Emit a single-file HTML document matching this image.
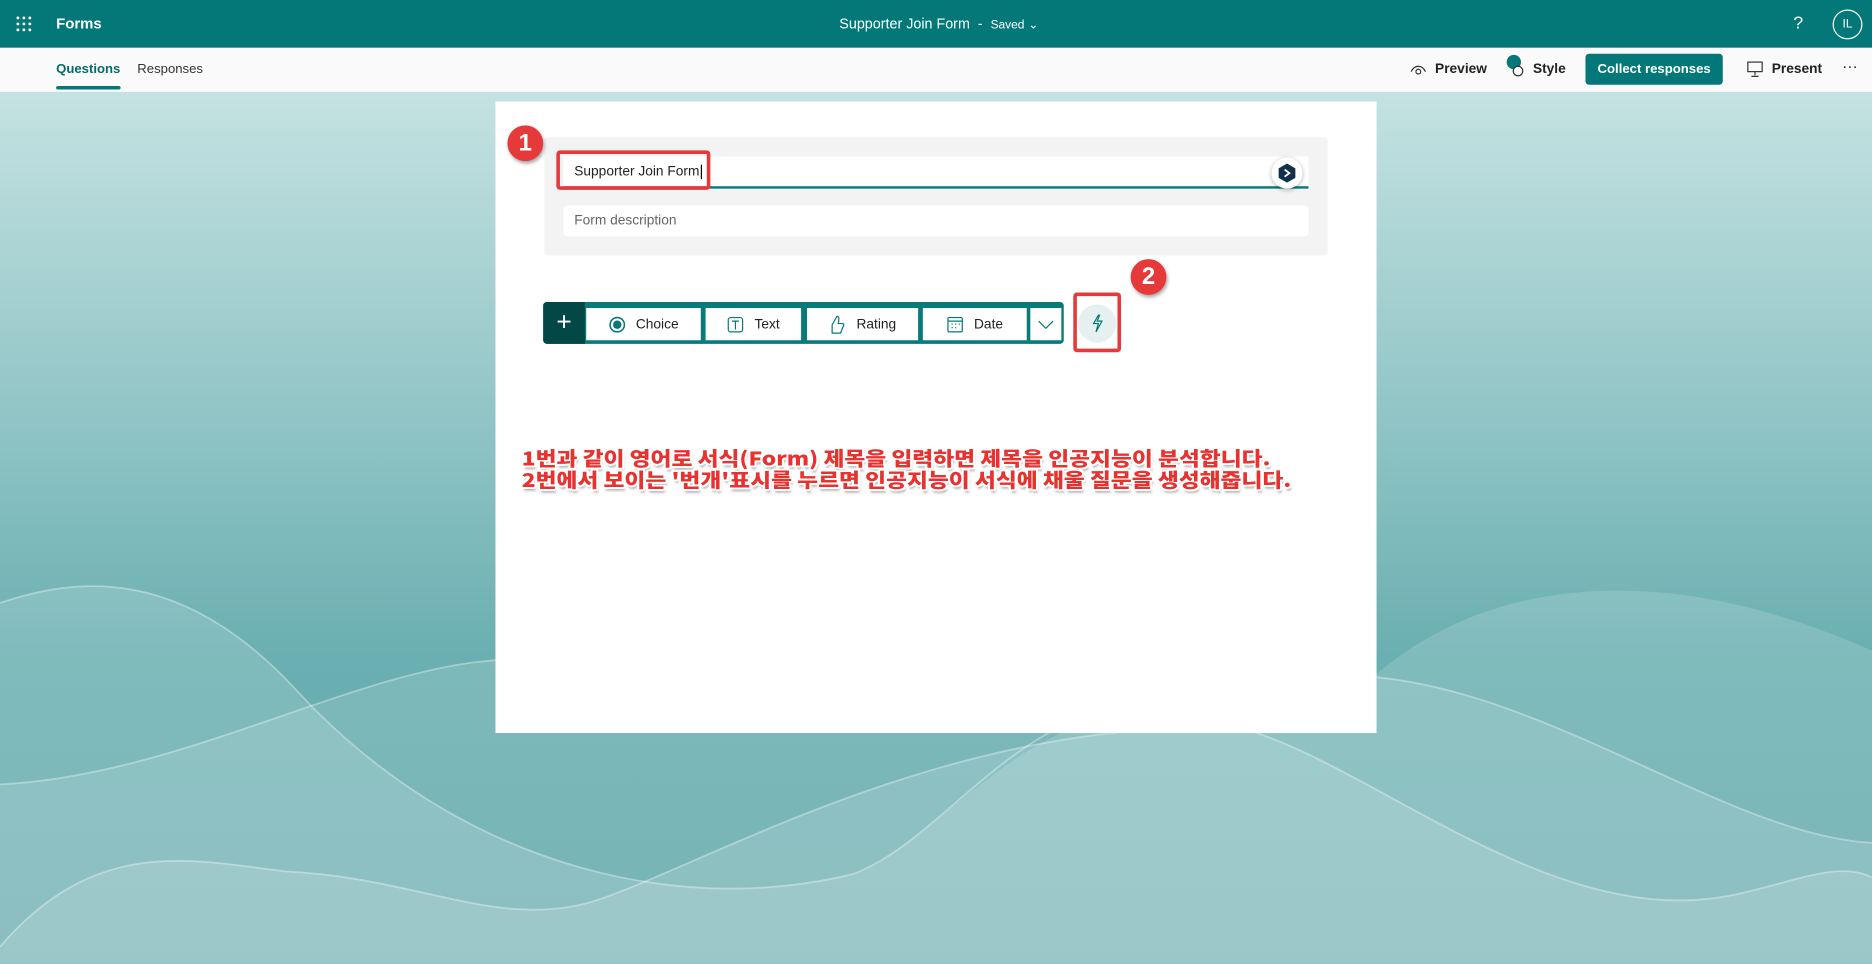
<!DOCTYPE html>
<html><head><meta charset="utf-8">
<style>
*{margin:0;padding:0;box-sizing:border-box}
html,body{width:1872px;height:964px;overflow:hidden;background:#8cc3c4}
#w{position:absolute;left:0;top:0;width:1568px;height:807px;transform:scale(1.19388);transform-origin:0 0;font-family:"Liberation Sans","Noto Sans CJK KR",sans-serif;overflow:hidden}
.abs{position:absolute}
.top{left:0;top:0;width:1568px;height:40px;background:#047878;color:#fff}
.nav{left:0;top:40px;width:1568px;height:37px;background:#fafafa}
.card{left:415px;top:85px;width:738px;height:529px;background:#fff}
.btn{position:absolute;top:258px;height:27px;background:#fff;font-size:11.5px;color:#222;display:flex;align-items:center;justify-content:center;gap:9px}
.rc{position:absolute;width:30px;height:30px;border-radius:50%;background:#e63a3a;color:#fff;font-weight:bold;font-size:20px;text-align:center;line-height:30px;box-shadow:1px 2px 3px rgba(0,0,0,.35)}
.kr{position:absolute;left:437px;font-size:16px;font-weight:900;color:#e8322f;white-space:nowrap;letter-spacing:0;line-height:16px;
text-shadow:-1.3px -1.3px 0 #fff,1.3px -1.3px 0 #fff,-1.3px 1.3px 0 #fff,1.3px 1.3px 0 #fff,0 1.5px 0 #fff,0 -1.5px 0 #fff,1.5px 0 0 #fff,-1.5px 0 0 #fff,1px 3px 2px rgba(0,0,0,.35);font-family:"Noto Sans CJK KR","Liberation Sans",sans-serif;transform-origin:0 0}
.nt{font-size:11.5px;color:#222;font-weight:bold}
</style></head><body><div id="w">
<svg class="abs" style="left:0;top:77px" width="1568" height="730" viewBox="0 77 1568 730">
<defs><linearGradient id="g" x1="0" y1="0" x2="0" y2="1"><stop offset="0" stop-color="#c5e2e2"/><stop offset=".65" stop-color="#6aafb1"/><stop offset="1" stop-color="#62a9ab"/></linearGradient></defs>
<rect x="0" y="77" width="1568" height="730" fill="url(#g)"/>
<path d="M0 505 C60 485 150 470 250 580 C380 720 560 770 715 732 C800 700 870 560 1040 600 L1150 567 C1250 480 1400 470 1568 545 L1568 807 L0 807Z" fill="#fff" opacity=".15"/>
<path d="M0 505 C60 485 150 470 250 580 C380 720 560 770 715 732 C800 700 870 560 1000 600" fill="none" stroke="#fff" stroke-width="1.5" opacity=".35"/>
<path d="M0 657 C150 650 300 560 415 553 L1150 567 C1300 580 1450 700 1568 706 L1568 807 L0 807Z" fill="#fff" opacity=".13"/>
<path d="M0 657 C150 650 300 560 415 553 M1150 567 C1300 580 1450 700 1568 706" fill="none" stroke="#fff" stroke-width="1.5" opacity=".35"/>
<path d="M0 793 C80 700 160 720 240 730 C350 735 420 780 500 754 C600 720 800 600 1040 610 C1150 640 1300 780 1450 750 C1500 740 1540 720 1568 735 L1568 807 L0 807Z" fill="#fff" opacity=".15"/>
<path d="M0 793 C80 700 160 720 240 730 C350 735 420 780 500 754 C600 720 800 600 1040 610 C1150 640 1300 780 1450 750 C1500 740 1540 720 1568 735" fill="none" stroke="#fff" stroke-width="1.5" opacity=".35"/>
</svg>
<div class="abs top">
<svg class="abs" style="left:13px;top:13px" width="14" height="14"><g fill="#fff"><circle cx="2" cy="2" r="1.2"/><circle cx="7" cy="2" r="1.2"/><circle cx="12" cy="2" r="1.2"/><circle cx="2" cy="7" r="1.2"/><circle cx="7" cy="7" r="1.2"/><circle cx="12" cy="7" r="1.2"/><circle cx="2" cy="12" r="1.2"/><circle cx="7" cy="12" r="1.2"/><circle cx="12" cy="12" r="1.2"/></g></svg>
<div class="abs" style="left:47px;top:13px;font-size:12.5px;font-weight:bold">Forms</div>
<div class="abs" style="left:703px;top:13px;font-size:12px">Supporter Join Form &nbsp;-&nbsp; <span style="font-size:10px">Saved</span> <span style="font-size:10px">&#8964;</span></div>
<div class="abs" style="left:1502px;top:11px;font-size:15px">?</div>
<div class="abs" style="left:1535px;top:8px;width:25px;height:25px;border:1px solid #fff;border-radius:50%;font-size:10px;text-align:center;line-height:23px">IL</div>
</div>
<div class="abs nav">
<div class="abs" style="left:47px;top:12px;color:#036c6c;font-weight:bold;font-size:11px">Questions</div>
<div class="abs" style="left:47px;top:32px;width:54px;height:3px;background:#047878;border-radius:2px"></div>
<div class="abs" style="left:115px;top:12px;font-size:11px;color:#333">Responses</div>
<svg class="abs" style="left:1181px;top:12px" width="14" height="12"><path d="M1 8 C4 2 10 2 13 8" stroke="#333" fill="none"/><circle cx="7" cy="8" r="2" stroke="#333" fill="none"/></svg>
<div class="abs nt" style="left:1202px;top:12px">Preview</div>
<div class="abs" style="left:1262px;top:6px;width:12px;height:12px;border-radius:50%;background:#047878"></div>
<div class="abs" style="left:1267px;top:15px;width:9px;height:9px;border:1px solid #333;border-radius:50%;background:#fff"></div>
<div class="abs nt" style="left:1284px;top:12px">Style</div>
<div class="abs" style="left:1328px;top:5px;width:115px;height:26px;background:#047878;border-radius:3px;color:#fff;font-size:11px;font-weight:bold;text-align:center;line-height:26px">Collect responses</div>
<svg class="abs" style="left:1463px;top:11px" width="14" height="14"><rect x="1" y="1" width="12" height="8" stroke="#333" fill="none"/><path d="M7 9V12M4 13H10" stroke="#333"/></svg>
<div class="abs nt" style="left:1484px;top:12px">Present</div>
<div class="abs" style="left:1543px;top:8px;font-size:13px;color:#222">···</div>
</div>
<div class="abs card"></div>
<div class="abs" style="left:456px;top:115px;width:656px;height:99px;background:#f3f3f3;border-radius:3px"></div>
<div class="abs" style="left:472px;top:131px;width:624px;height:27px;background:#fff;border-bottom:2px solid #047878"></div>
<div class="abs" style="left:481px;top:138px;font-size:11.5px;color:#222">Supporter Join Form<span style="border-left:1px solid #000;margin-left:1px"></span></div>
<div class="abs" style="left:466px;top:126px;width:129px;height:33px;border:3px solid #e63a3a;border-radius:3px"></div>
<div class="abs" style="left:1065px;top:132px;width:26px;height:26px;border-radius:50%;background:#fff;box-shadow:0 1px 4px rgba(0,0,0,.3)"></div>
<svg class="abs" style="left:1070px;top:136px" width="16" height="18"><path d="M8 1 L15 5 V13 L8 17 L1 13 V5Z" fill="#13304a"/><path d="M6 6 L10 9 L6 12" stroke="#fff" stroke-width="1.5" fill="none"/></svg>
<div class="abs" style="left:472px;top:172px;width:624px;height:26px;background:#fff;border-radius:3px"></div>
<div class="abs" style="left:481px;top:179px;font-size:11.5px;color:#666">Form description</div>
<div class="rc" style="left:425px;top:105px">1</div>
<div class="abs" style="left:455px;top:253px;width:436px;height:35px;background:#077a7a;border-radius:3px"></div>
<div class="abs" style="left:455px;top:253px;width:35px;height:35px;background:#034747;border-radius:3px 0 0 3px;color:#fff;font-size:22px;text-align:center;line-height:33px;font-weight:300">+</div>
<div class="btn" style="left:491px;width:96px"><svg width="14" height="14"><circle cx="7" cy="7" r="6" stroke="#047878" stroke-width="1.3" fill="none"/><circle cx="7" cy="7" r="3.5" fill="#047878"/></svg>Choice</div>
<div class="btn" style="left:591px;width:80px"><svg width="14" height="14"><rect x="1" y="1" width="12" height="12" rx="2" stroke="#047878" fill="none"/><path d="M4 4H10M7 4V11" stroke="#047878"/></svg>Text</div>
<div class="btn" style="left:676px;width:93px"><svg width="14" height="16"><path d="M3 15 V8 L7 1 C9 1 9 4 8 7 H12 C13 7 13 9 12 10 L10 15Z" stroke="#047878" fill="none"/></svg>Rating</div>
<div class="btn" style="left:773px;width:87px"><svg width="14" height="14"><rect x="1" y="1" width="12" height="12" rx="1" stroke="#047878" fill="none"/><path d="M1 4H13" stroke="#047878"/><g fill="#047878"><rect x="4" y="6" width="1" height="1"/><rect x="7" y="6" width="1" height="1"/><rect x="10" y="6" width="1" height="1"/><rect x="4" y="9" width="1" height="1"/><rect x="7" y="9" width="1" height="1"/></g></svg>Date</div>
<div class="btn" style="left:863px;width:26px"><svg width="14" height="8"><path d="M1 1 L7 7 L13 1" stroke="#047878" fill="none"/></svg></div>
<div class="abs" style="left:903px;top:255px;width:32px;height:32px;border-radius:50%;background:#e6f0f0"></div>
<svg class="abs" style="left:913px;top:263px" width="12" height="16"><path d="M7 1 L3 8 H7 L5 15 L10 6 H6 L8 1Z" stroke="#047878" fill="none"/></svg>
<div class="abs" style="left:899px;top:245px;width:40px;height:50px;border:3px solid #e63a3a;border-radius:3px"></div>
<div class="rc" style="left:947px;top:217px">2</div>
<div class="kr" style="top:375px;transform:scale(1.19,1.0)">1번과 같이 영어로 서식(Form) 제목을 입력하면 제목을 인공지능이 분석합니다.</div>
<div class="kr" style="top:393px;transform:scale(1.19,1.0)">2번에서 보이는 '번개'표시를 누르면 인공지능이 서식에 채울 질문을 생성해줍니다.</div>
</div></body></html>
